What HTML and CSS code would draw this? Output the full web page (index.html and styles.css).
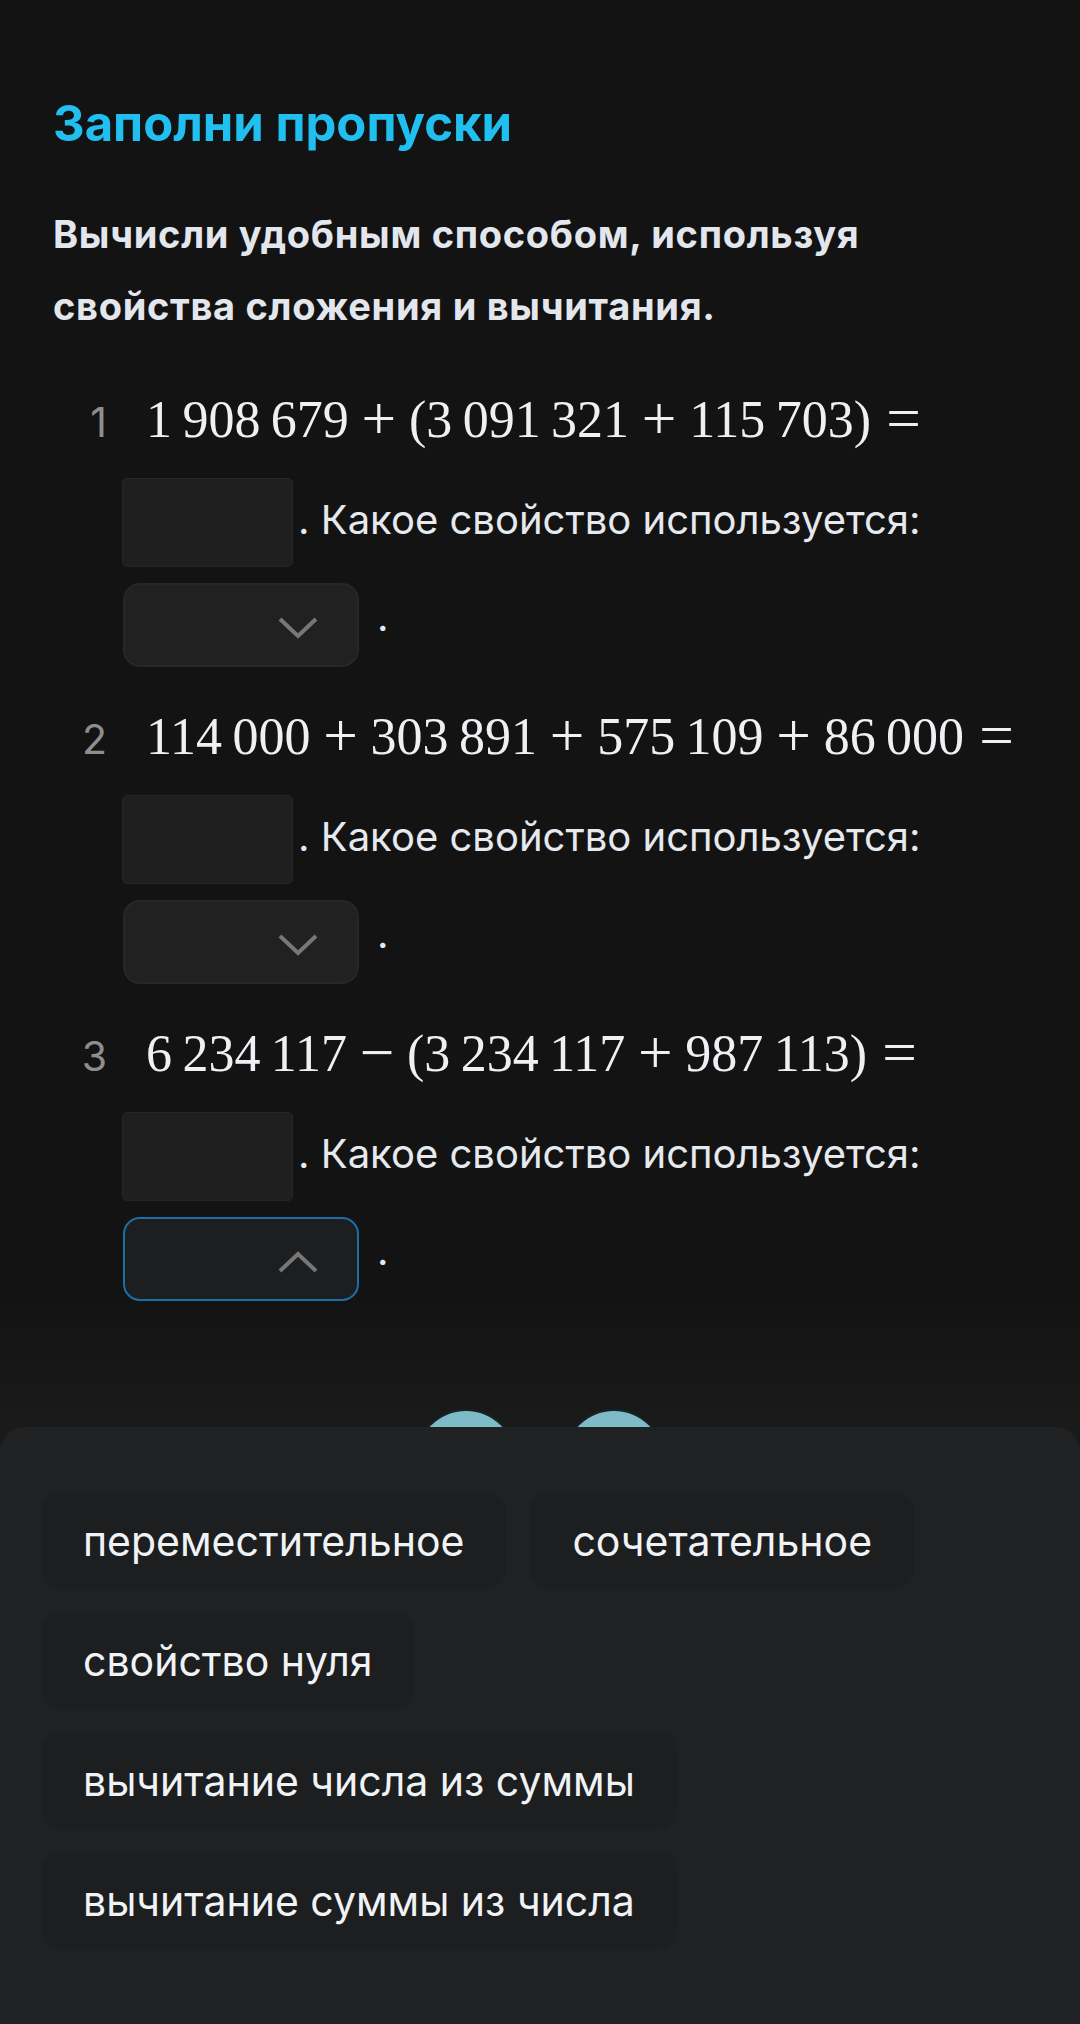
FILE: index.html
```html
<!DOCTYPE html>
<html lang="ru">
<head>
    <meta charset="UTF-8">
    <meta name="viewport" content="width=device-width, initial-scale=1.0">
    <title>Заполни пропуски</title>
    <link rel="stylesheet" href="styles.css">
</head>
<body>

<main class="page">
    <h1 class="title">Заполни пропуски</h1>
    <p class="task">Вычисли удобным способом, используя свойства сложения и вычитания.</p>

    <ol class="items">
        <li class="item">
            <div class="eq-row">
                <span class="num">1</span>
                <span class="math">1&thinsp;908&thinsp;679<span class="op">+</span>(3&thinsp;091&thinsp;321<span class="op">+</span>115&thinsp;703)<span class="op rel">=</span></span>
            </div>
            <div class="answer-row">
                <span class="blank"></span>
                <span class="text">. Какое свойство используется:</span>
            </div>
            <div class="select-row">
                <div class="select">
                    <svg width="40" height="22" viewBox="0 0 40 22"><polyline points="2,2 20,19 38,2" fill="none" stroke="#777" stroke-width="4"/></svg>
                </div>
                <span class="dot">.</span>
            </div>
        </li>
        <li class="item">
            <div class="eq-row">
                <span class="num">2</span>
                <span class="math">114&thinsp;000<span class="op">+</span>303&thinsp;891<span class="op">+</span>575&thinsp;109<span class="op">+</span>86&thinsp;000<span class="op rel">=</span></span>
            </div>
            <div class="answer-row">
                <span class="blank"></span>
                <span class="text">. Какое свойство используется:</span>
            </div>
            <div class="select-row">
                <div class="select">
                    <svg width="40" height="22" viewBox="0 0 40 22"><polyline points="2,2 20,19 38,2" fill="none" stroke="#777" stroke-width="4"/></svg>
                </div>
                <span class="dot">.</span>
            </div>
        </li>
        <li class="item">
            <div class="eq-row">
                <span class="num">3</span>
                <span class="math">6&thinsp;234&thinsp;117<span class="op">&minus;</span>(3&thinsp;234&thinsp;117<span class="op">+</span>987&thinsp;113)<span class="op rel">=</span></span>
            </div>
            <div class="answer-row">
                <span class="blank"></span>
                <span class="text">. Какое свойство используется:</span>
            </div>
            <div class="select-row">
                <div class="select open">
                    <svg width="40" height="22" viewBox="0 0 40 22"><polyline points="2,20 20,3 38,20" fill="none" stroke="#777" stroke-width="4"/></svg>
                </div>
                <span class="dot">.</span>
            </div>
        </li>
    </ol>

    <div class="nav">
        <span class="nav-btn"></span>
        <span class="nav-btn"></span>
    </div>
</main>

<div class="sheet">
    <div class="chips">
        <span class="chip">переместительное</span>
        <span class="chip">сочетательное</span>
        <span class="chip">свойство нуля</span>
        <span class="chip">вычитание числа из суммы</span>
        <span class="chip">вычитание суммы из числа</span>
    </div>
</div>

</body>
</html>
```
FILE: styles.css
```css
body {
    margin: 0;
    min-height: 2024px;
    background: linear-gradient(to bottom, #131313 0, #131313 1300px, #1a1a1b 1427px);
    color: #e6e9ee;
    font-family: Inter, "Noto Sans", sans-serif;
    overflow: hidden;
}
.page {
    padding: 94px 53px 0;
}
.title {
    margin: 0;
    font-size: 49px;
    line-height: 60px;
    font-weight: 700;
    color: #20bff0;
}
.task {
    margin: 44px 0 0;
    max-width: 900px;
    font-size: 38px;
    line-height: 72px;
    font-weight: 700;
    letter-spacing: 0.7px;
    color: #e3e7ed;
}
.items {
    list-style: none;
    margin: 42px 0 0;
    padding: 0;
}
.item {
    margin-bottom: 34px;
}
.item:last-child {
    margin-bottom: 0;
}
.eq-row {
    display: flex;
    align-items: baseline;
    height: 72px;
    white-space: nowrap;
}
.num {
    width: 54px;
    margin-right: 39px;
    text-align: right;
    font-size: 41px;
    color: #8e8e8e;
}
.math {
    font-family: "Liberation Serif", "Times New Roman", serif;
    font-size: 52px;
    line-height: 72px;
    color: #eef0f3;
}
.op {
    display: inline-block;
    width: 0.66em;
    margin: 0 0.16em;
    font-size: 1.18em;
    line-height: 1;
    text-align: center;
    vertical-align: -0.04em;
}
.op.rel {
    margin: 0 0 0 0.2em;
}
.answer-row {
    display: flex;
    align-items: center;
    margin: 22px 0 0 69px;
}
.blank {
    width: 171px;
    height: 89px;
    box-sizing: border-box;
    background-color: #1f1f1f;
    border: 1px solid #262626;
    border-radius: 5px;
}
.text {
    margin: 0 0 6px 5px;
    font-size: 40px;
    line-height: 48px;
    white-space: nowrap;
}
.select-row {
    display: flex;
    align-items: center;
    margin: 16px 0 0 70px;
}
.select {
    display: flex;
    align-items: center;
    justify-content: flex-end;
    width: 236px;
    height: 84px;
    box-sizing: border-box;
    padding: 6px 39px 0 0;
    background-color: #212121;
    border: 2px solid #272727;
    border-radius: 17px;
}
.select.open {
    border-color: #1b6ea6;
    background-color: #1c1e20;
}
.dot {
    margin: 0 0 16px 18px;
    font-size: 40px;
    line-height: 48px;
}
.nav {
    display: flex;
    justify-content: center;
    gap: 50px;
    margin-top: 110px;
}
.nav-btn {
    width: 98px;
    height: 98px;
    border-radius: 50%;
    background-color: #7fbac9;
    box-shadow: 0 0 0 2px #15252a;
}
.sheet {
    position: fixed;
    left: 0;
    right: 0;
    bottom: 0;
    height: 597px;
    box-sizing: border-box;
    padding: 65px 41px;
    background-color: #202122;
    border-radius: 24px 24px 0 0;
}
.chips {
    display: flex;
    flex-wrap: wrap;
    gap: 23px 24px;
}
.chip {
    display: flex;
    align-items: center;
    height: 97px;
    padding: 0 42px;
    background-color: #1d1e1f;
    border-radius: 20px;
    font-size: 41px;
    color: #f0f3f6;
    white-space: nowrap;
}
```
